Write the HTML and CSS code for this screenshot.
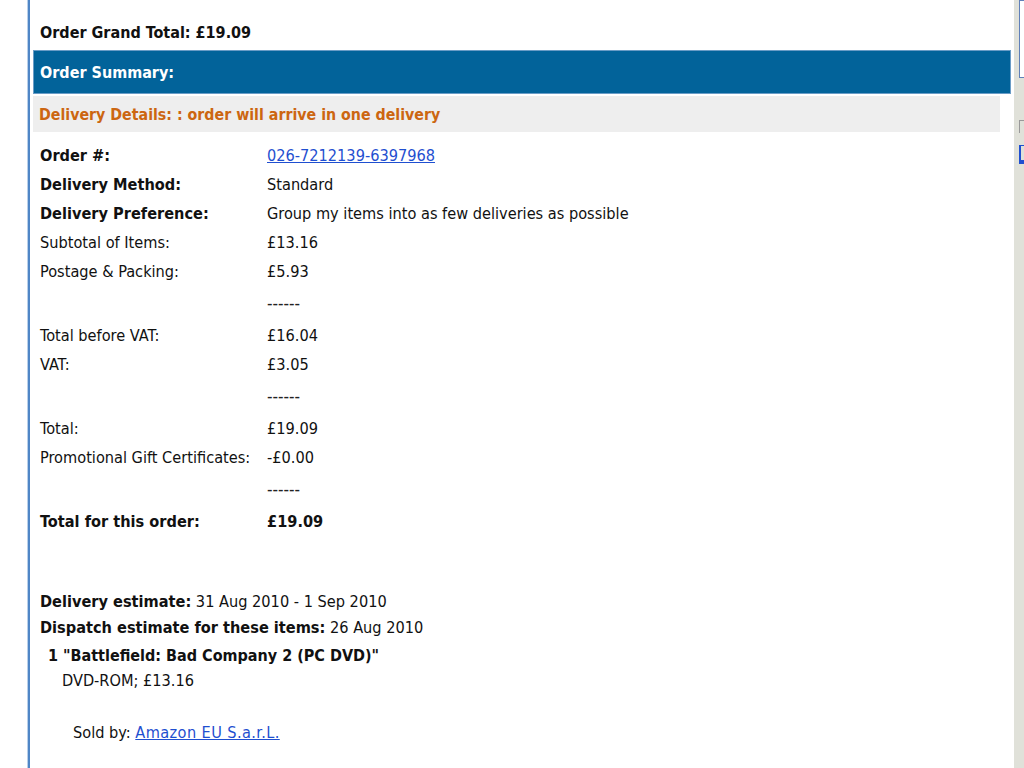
FILE: index.html
```html
<!DOCTYPE html>
<html>
<head>
<meta charset="utf-8">
<link rel="stylesheet" href="styles.css">
</head>
<body>
<div class="page">
  <div class="main">
    <div class="grand">Order Grand Total: £19.09</div>
    <div class="summary-bar">Order Summary:</div>
    <div class="delivery-bar">Delivery Details: : order will arrive in one delivery</div>
    <table class="details">
      <tr><td class="lbl b">Order #:</td><td><a href="#">026-7212139-6397968</a></td></tr>
      <tr><td class="lbl b">Delivery Method:</td><td>Standard</td></tr>
      <tr><td class="lbl b">Delivery Preference:</td><td>Group my items into as few deliveries as possible</td></tr>
      <tr><td class="lbl">Subtotal of Items:</td><td>£13.16</td></tr>
      <tr><td class="lbl">Postage &amp; Packing:</td><td>£5.93</td></tr>
      <tr class="dash"><td></td><td>------</td></tr>
      <tr><td class="lbl">Total before VAT:</td><td>£16.04</td></tr>
      <tr><td class="lbl">VAT:</td><td>£3.05</td></tr>
      <tr class="dash"><td></td><td>------</td></tr>
      <tr><td class="lbl">Total:</td><td>£19.09</td></tr>
      <tr><td class="lbl">Promotional Gift Certificates:</td><td>-£0.00</td></tr>
      <tr class="dash"><td></td><td>------</td></tr>
      <tr class="b"><td class="lbl">Total for this order:</td><td>£19.09</td></tr>
    </table>
    <div class="estimates">
      <div><span class="b">Delivery estimate:</span> 31 Aug 2010 - 1 Sep 2010</div>
      <div><span class="b">Dispatch estimate for these items:</span> 26 Aug 2010</div>
    </div>
    <div class="item">
      <div class="item-title b">1 "Battlefield: Bad Company 2 (PC DVD)"</div>
      <div class="item-sub">DVD-ROM; £13.16</div>
      <div class="sold">Sold by: <a href="#">Amazon EU S.a.r.L.</a></div>
    </div>
  </div>
  <div class="side">
    <div class="side-box"></div>
    <div class="side-bracket"></div>
    <div class="side-link"></div>
  </div>
</div>
</body>
</html>
```

FILE: styles.css
```css
html, body {
  margin: 0;
  padding: 0;
  background: #ffffff;
}
body {
  font-family: "DejaVu Sans Condensed", "DejaVu Sans", sans-serif;
  font-stretch: condensed;
  font-size: 16.2px;
  color: #111111;
}
.page {
  display: flex;
  height: 768px;
  overflow: hidden;
}
.main {
  margin-left: 28px;
  width: 982px;
  border-left: 2px solid #4f86c6;
  box-shadow: -1px 0 0 #b9d0ea;
  padding-left: 3px;
}
.b { font-weight: bold; }
.grand {
  font-weight: bold;
  font-size: 16px;
  line-height: 24px;
  padding: 21px 0 5px 7px;
}
.summary-bar {
  width: 978px;
  height: 44px;
  line-height: 44px;
  background: #02639a;
  border: 1px solid #6a9cc6;
  color: #ffffff;
  font-weight: bold;
  font-size: 16px;
  padding-left: 6px;
  box-sizing: border-box;
}
.delivery-bar {
  width: 967px;
  height: 36px;
  line-height: 37px;
  margin-top: 2px;
  background: #eeeeee;
  color: #cc6611;
  font-weight: bold;
  font-size: 15.8px;
  padding-left: 6px;
  box-sizing: border-box;
}
.details {
  border-collapse: collapse;
  margin: 9px 0 0 7px;
}
.details td {
  padding: 0;
  height: 29px;
  line-height: 29px;
  vertical-align: middle;
  white-space: nowrap;
}
.details td.lbl {
  width: 227px;
}
.details tr.dash td {
  height: 35px;
  line-height: 35px;
  color: #222222;
  font-size: 17px;
}
a {
  color: #1f4fd0;
  text-decoration: underline;
}
.estimates {
  margin: 53px 0 0 7px;
  line-height: 26px;
}
.item {
  line-height: 25px;
}
.item-title {
  margin-left: 15px;
  margin-top: 2px;
  font-size: 16px;
}
.item-sub {
  margin-left: 29px;
}
.sold {
  margin-left: 40px;
  margin-top: 27px;
}
.sold a {
  letter-spacing: 0.4px;
}
.side {
  margin-left: 3px;
  flex: 1;
  background: #e0e1d9;
  padding-left: 5px;
}
.side-box {
  height: 76px;
  border: 1px solid #6080b8;
  border-right: none;
  background: #ffffff;
}
.side-bracket {
  margin-top: 42px;
  height: 12px;
  border-left: 1px solid #999999;
  border-top: 1px solid #999999;
}
.side-link {
  margin-top: 12px;
  width: 3px;
  height: 14px;
  border-left: 2px solid #1f4fd0;
  border-top: 1px solid #1f4fd0;
  border-bottom: 1px solid #1f4fd0;
  box-shadow: 0 3px 0 #1f4fd0;
}
```
